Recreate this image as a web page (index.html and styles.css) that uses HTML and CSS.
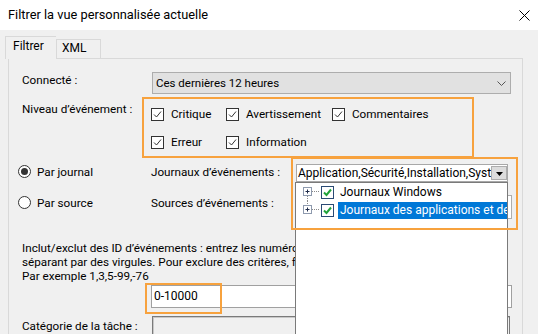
FILE: index.html
```html
<!DOCTYPE html>
<html lang="fr">
<head>
<meta charset="utf-8">
<title>Filtrer la vue personnalisée actuelle</title>
<link rel="stylesheet" href="styles.css">
</head>
<body>
<div class="window">
  <header class="titlebar">
    <span class="title">Filtrer la vue personnalisée actuelle</span>
    <svg class="close" width="11" height="11" viewBox="0 0 11 11"><path d="M0.5 0.5L10.5 10.5M10.5 0.5L0.5 10.5" stroke="#000" stroke-width="1"/></svg>
  </header>
  <div class="tabs">
    <div class="tab tab-active">Filtrer</div>
    <div class="tab">XML</div>
  </div>
  <div class="panel">
    <div class="row-connecte">
      <span class="label label-connecte">Connecté :</span>
      <div class="select">
        <span>Ces dernières 12 heures</span>
        <svg class="chevron" width="9" height="5" viewBox="0 0 9 5"><path d="M0.5 0.5L4.5 4.5L8.5 0.5" fill="none" stroke="#555" stroke-width="1"/></svg>
      </div>
    </div>
    <div class="row-niveau">
      <span class="label label-niveau">Niveau d’événement :</span>
      <div class="levels">
        <div class="check"><span class="box"><svg width="11" height="11" viewBox="0 0 11 11"><path d="M2 5.5L4.5 8L9 2.5" fill="none" stroke="#333" stroke-width="1"/></svg></span>Critique</div>
        <div class="check"><span class="box"><svg width="11" height="11" viewBox="0 0 11 11"><path d="M2 5.5L4.5 8L9 2.5" fill="none" stroke="#333" stroke-width="1"/></svg></span>Avertissement</div>
        <div class="check"><span class="box"><svg width="11" height="11" viewBox="0 0 11 11"><path d="M2 5.5L4.5 8L9 2.5" fill="none" stroke="#333" stroke-width="1"/></svg></span>Commentaires</div>
        <div class="check"><span class="box"><svg width="11" height="11" viewBox="0 0 11 11"><path d="M2 5.5L4.5 8L9 2.5" fill="none" stroke="#333" stroke-width="1"/></svg></span>Erreur</div>
        <div class="check"><span class="box"><svg width="11" height="11" viewBox="0 0 11 11"><path d="M2 5.5L4.5 8L9 2.5" fill="none" stroke="#333" stroke-width="1"/></svg></span>Information</div>
      </div>
    </div>
    <div class="source-rows">
      <span class="radio radio-checked"></span>
      <span class="radio-label">Par journal</span>
      <span class="src-label">Journaux d’événements :</span>
      <div class="combo">
        <span class="combo-text">Application,Sécurité,Installation,Système,Événements transférés</span>
        <span class="combo-btn"><svg width="7" height="4" viewBox="0 0 7 4"><path d="M0 0H7L3.5 4Z" fill="#000"/></svg></span>
      </div>
      <span class="radio"></span>
      <span class="radio-label">Par source</span>
      <span class="src-label">Sources d’événements :</span>
      <div class="combo combo-sources"></div>
    </div>
    <p class="help">
      <span class="help-line">Inclut/exclut des ID d’événements : entrez les numéros ou plages d’ID en les</span>
      <span class="help-line">séparant par des virgules. Pour exclure des critères, faites-les précéder</span>
      <span class="help-line">Par exemple 1,3,5-99,-76</span>
    </p>
    <div class="id-input">0-10000</div>
    <div class="row-categorie">
      <span class="label label-categorie">Catégorie de la tâche :</span>
      <div class="cat-box"></div>
    </div>
  </div>
</div>

<div class="popup">
  <div class="tree-row">
    <svg class="expander" width="18" height="18" viewBox="0 0 18 18"><rect x="0.5" y="4.5" width="8" height="8" fill="#fff" stroke="#8e9aae"/><path d="M2.5 8.5H6.5M4.5 6.5V10.5" stroke="#1e2b4a"/><path d="M9 8.5H17" stroke="#8a8a8a" stroke-dasharray="1 1"/><path d="M4.5 13V18" stroke="#8a8a8a" stroke-dasharray="1 1"/></svg>
    <svg class="tcheck" width="13" height="13" viewBox="0 0 13 13"><rect x="0.5" y="0.5" width="12" height="12" fill="#fff" stroke="#2a4a74"/><path d="M3 6.5L5.5 9L10 3.5" fill="none" stroke="#22a33a" stroke-width="2"/></svg>
    <span class="tree-text">Journaux Windows</span>
  </div>
  <div class="tree-row">
    <svg class="expander" width="18" height="18" viewBox="0 0 18 18"><path d="M4.5 0V4" stroke="#8a8a8a" stroke-dasharray="1 1"/><rect x="0.5" y="4.5" width="8" height="8" fill="#fff" stroke="#8e9aae"/><path d="M2.5 8.5H6.5M4.5 6.5V10.5" stroke="#1e2b4a"/><path d="M9 8.5H17" stroke="#8a8a8a" stroke-dasharray="1 1"/></svg>
    <svg class="tcheck" width="13" height="13" viewBox="0 0 13 13"><rect x="0.5" y="0.5" width="12" height="12" fill="#fff" stroke="#2a4a74"/><path d="M3 6.5L5.5 9L10 3.5" fill="none" stroke="#22a33a" stroke-width="2"/></svg>
    <span class="tree-text tree-selected">Journaux des applications et des services</span>
  </div>
</div>

<div class="mark mark-niveau"></div>
<div class="mark mark-journaux"></div>
<div class="mark mark-id"></div>
</body>
</html>
```

FILE: styles.css
```css
* {
  box-sizing: border-box;
  margin: 0;
  padding: 0;
}

html,
body {
  width: 538px;
  height: 334px;
  overflow: hidden;
}

body {
  position: relative;
  background: #f0f0f0;
  font-family: Roboto, "Noto Sans", sans-serif;
  font-size: 11.7px;
  line-height: 16px;
  color: #000;
}

.titlebar {
  height: 30px;
  background: #fff;
  display: flex;
  align-items: center;
  justify-content: space-between;
  padding: 0 8px 0 8px;
}

.title {
  font-size: 12.8px;
}

.close {
  display: block;
}

.tabs {
  display: flex;
  align-items: flex-end;
  height: 28px;
  padding-left: 5px;
}

.tab {
  height: 19px;
  padding: 0 6px 0 4px;
  border: 1px solid #d9d9d9;
  border-bottom: none;
  background: #f0f0f0;
  white-space: nowrap;
  font-size: 12px;
}

.tab-active {
  position: relative;
  z-index: 1;
  width: 51px;
  height: 23px;
  margin-bottom: -1px;
  padding: 1px 0 0 7px;
  background: #f0f0f0;
  border-right: none;
}

.tab + .tab {
  width: 45px;
  padding-left: 5px;
}

.panel {
  width: 515px;
  height: 290px;
  margin-left: 8px;
  border: 1px solid #d9d9d9;
  padding: 13px 0 0 13px;
  overflow: hidden;
}

.row-connecte {
  display: grid;
  grid-template-columns: 130px 359px;
  height: 22px;
}

.label {
  white-space: nowrap;
}

.label-connecte {
  margin-top: 0;
}

.select {
  height: 22px;
  background: #e1e1e1;
  border: 1px solid #adadad;
  display: flex;
  align-items: center;
  justify-content: space-between;
  padding: 0 4px 0 3px;
  font-size: 11.5px;
}

.chevron {
  display: block;
}

.row-niveau {
  display: grid;
  grid-template-columns: 129px auto;
  margin-top: 6px;
}

.label-niveau {
  margin-top: 1px;
}

.levels {
  display: grid;
  grid-template-columns: 75px 106px auto;
  grid-auto-rows: 28px;
  align-items: center;
}

.check {
  display: flex;
  align-items: center;
  white-space: nowrap;
}

.box {
  width: 13px;
  height: 13px;
  border: 1px solid #333;
  background: #fff;
  margin-right: 7px;
  display: block;
}

.box svg {
  display: block;
}

.source-rows {
  display: grid;
  grid-template-columns: 19px 114px 145px 216px;
  grid-auto-rows: 31px;
  align-items: center;
  margin-left: -4px;
}

.radio {
  width: 13px;
  height: 13px;
  border: 1px solid #333;
  border-radius: 50%;
  background: #fff;
  display: flex;
  align-items: center;
  justify-content: center;
}

.radio-checked::after {
  content: "";
  width: 7px;
  height: 7px;
  border-radius: 50%;
  background: #333;
}

.radio-label,
.src-label {
  white-space: nowrap;
}

.combo {
  align-self: start;
  margin-top: 8px;
  width: 212px;
  height: 18px;
  border: 1px solid #a8a8a8;
  background: #fff;
  display: flex;
  align-items: center;
  overflow: hidden;
}

.combo-text {
  flex: 1;
  white-space: nowrap;
  overflow: hidden;
  padding-left: 1px;
  font-size: 12px;
}

.combo-btn {
  width: 16px;
  height: 14px;
  background: #dcdcdc;
  border: 1px solid #adadad;
  display: flex;
  align-items: center;
  justify-content: center;
}

.combo-btn svg {
  display: block;
  margin-top: 2px;
}

.combo-sources {
  width: 216px;
  height: 24px;
  margin-top: 8px;
  border-color: #adadad;
}

.help {
  margin-top: 23px;
  width: 480px;
  line-height: 14px;
}

.help-line {
  display: block;
  white-space: nowrap;
}

.id-input {
  margin-top: 2px;
  margin-left: 129px;
  width: 361px;
  height: 23px;
  background: #fff;
  border: 1px solid #a0a0a0;
  padding: 2px 0 0 2px;
  font-size: 12px;
}

.row-categorie {
  display: grid;
  grid-template-columns: 130px 358px;
  margin-top: 8px;
}

.label-categorie {
  margin-top: 2px;
}

.cat-box {
  height: 30px;
  border: 1px solid #7a7a7a;
  box-shadow: inset 1px 1px 0 #c8c8c8;
  background: #f0f0f0;
}

/* Drop-down tree list (overlay) */
.popup {
  position: absolute;
  left: 295px;
  top: 182px;
  width: 213px;
  height: 170px;
  background: #fff;
  border: 1px solid #7a7a7a;
  padding-left: 7px;
}

.tree-row {
  display: flex;
  align-items: center;
  height: 18px;
}

.expander {
  display: block;
  flex: none;
}

.tcheck {
  display: block;
  flex: none;
}

.tree-text {
  flex: 1;
  height: 17px;
  margin-left: 4px;
  padding-left: 2px;
  white-space: nowrap;
  overflow: hidden;
  line-height: 17px;
  font-size: 12px;
}

.tree-selected {
  background: #0078d7;
  color: #fff;
}

/* Orange annotation frames */
.mark {
  position: absolute;
  border: 2px solid #f7a23e;
  pointer-events: none;
}

.mark-niveau {
  left: 142px;
  top: 97px;
  width: 332px;
  height: 61px;
}

.mark-journaux {
  left: 291px;
  top: 157px;
  width: 227px;
  height: 73px;
}

.mark-id {
  left: 145px;
  top: 283px;
  width: 77px;
  height: 31px;
}
```
